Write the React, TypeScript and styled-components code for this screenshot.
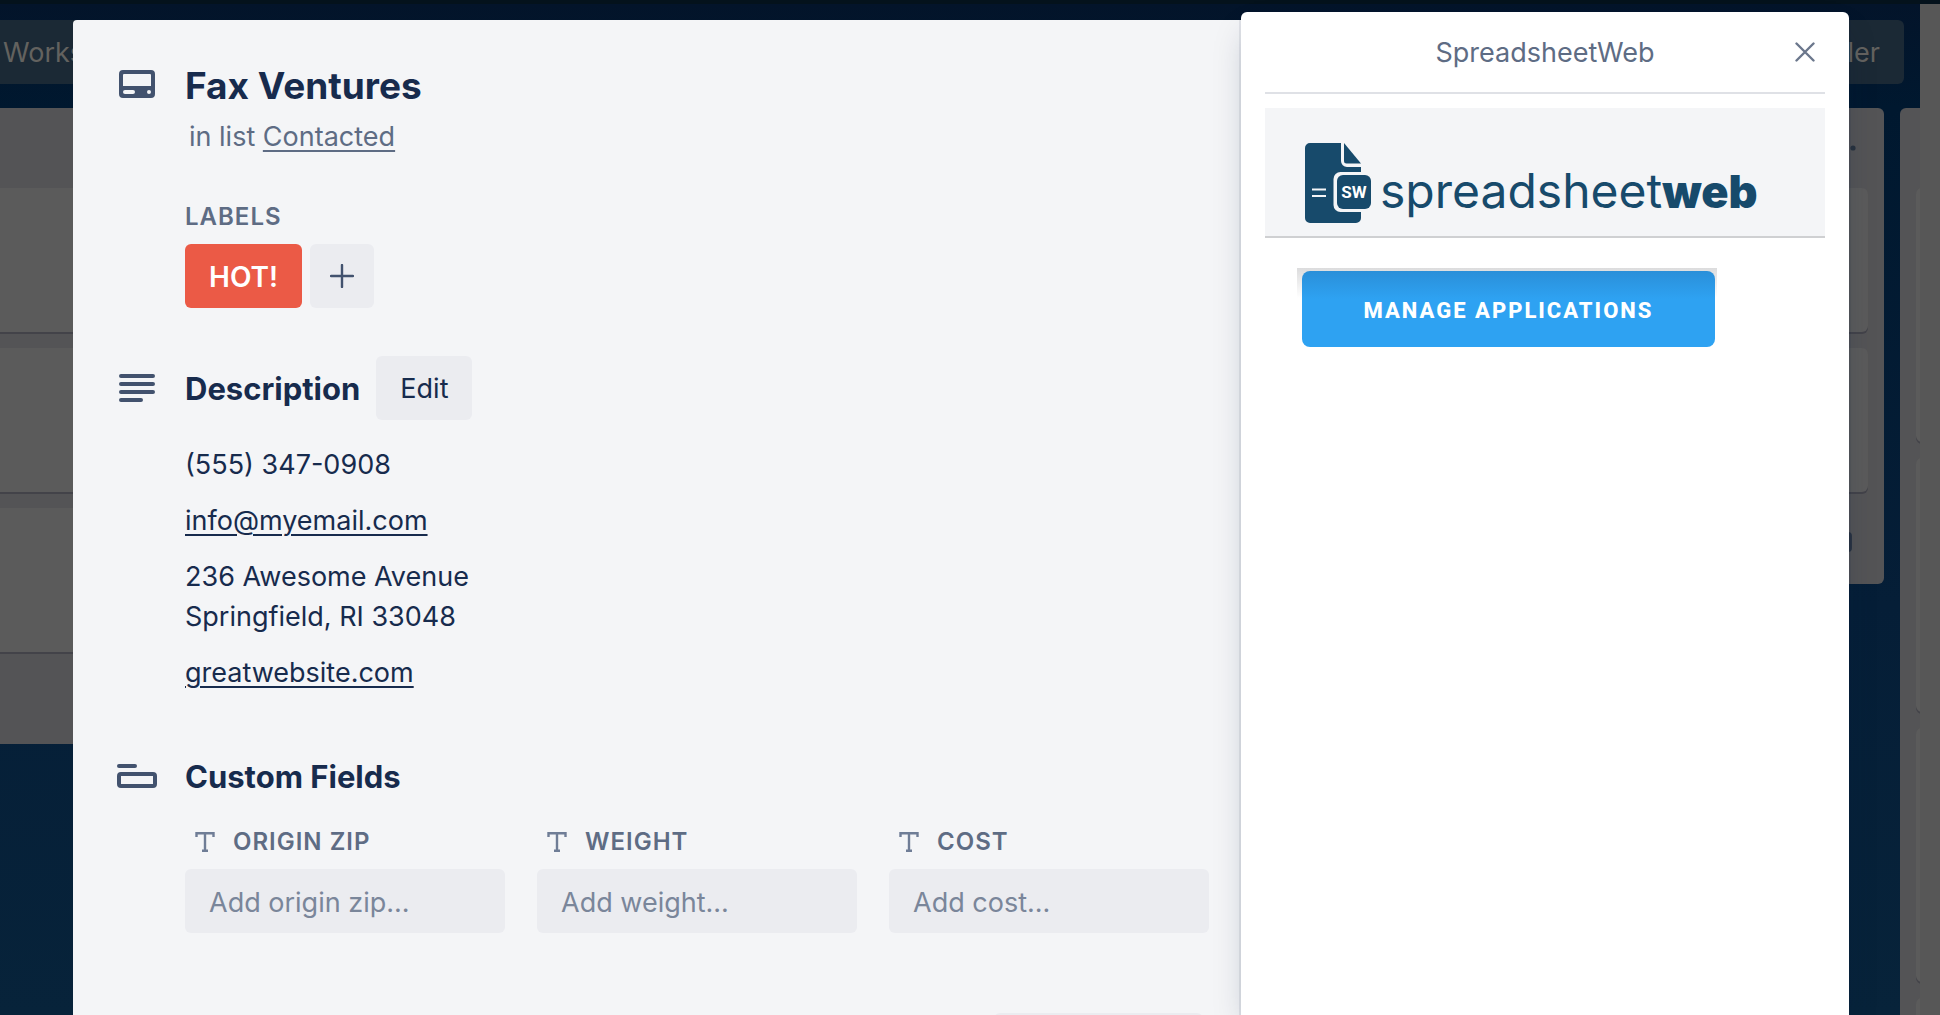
import React from "react";
import styled, { createGlobalStyle } from "styled-components";

const GlobalStyle = createGlobalStyle`
  *, *::before, *::after { box-sizing: border-box; }
  html, body { margin: 0; height: 100%; overflow: hidden; background: #051f38; }
  body, button, input {
    font-family: Inter, "Liberation Sans", sans-serif;
    font-size: 27px;
    line-height: 40px;
  }
  h1, h2, h3, p { margin: 0; }
`;

/* ---------- dimmed board behind the dialog ---------- */

const Page = styled.div`
  position: relative;
  display: flex;
  flex-direction: column;
  height: 100vh;
  overflow: hidden;
  background: #575757;
`;

const WindowStrip = styled.div`
  flex: none;
  height: 4px;
  background: #04121c;
`;

const Board = styled.div`
  flex: 1;
  min-height: 0;
  display: flex;
  flex-direction: column;
  margin-right: 20px;
  overflow: hidden;
  background: linear-gradient(#03142a, #00182f 104px, #051e37 600px, #07233a);
`;

const BoardBar = styled.div`
  display: flex;
  justify-content: space-between;
  padding: 16px 16px 24px 0;
`;

const BoardButton = styled.button<{ $flushLeft?: boolean }>`
  height: 64px;
  padding: ${(p) => (p.$flushLeft ? "2px 24px 0 3px" : "2px 24px 0")};
  border: 0;
  border-radius: ${(p) => (p.$flushLeft ? "0 6px 6px 0" : "6px")};
  background: #1b2935;
  color: #63625f;
`;

const Lists = styled.div`
  flex: 1;
  min-height: 0;
  display: flex;
  align-items: flex-start;
  justify-content: flex-end;
  gap: 16px;
  margin-right: -524px;
`;

const List = styled.section`
  flex: none;
  display: flex;
  flex-direction: column;
  gap: 16px;
  width: 544px;
  padding: 0 16px;
  border-radius: 6px;
  background: #545456;
`;

const ListTop = styled.div`
  display: flex;
  justify-content: flex-end;
  align-items: center;
  height: 64px;
  padding: 16px 12px 0 0;
`;

const Card = styled.div<{ $height: number }>`
  height: ${(p) => p.$height}px;
  border-radius: 6px;
  background: #5b5b5b;
  box-shadow: 0 2px 0 #434349;
`;

const ListFoot = styled.div<{ $height: number }>`
  display: flex;
  justify-content: flex-end;
  height: ${(p) => p.$height}px;
  padding: 24px 16px 0 0;
`;

const TemplateMark = styled.span`
  width: 20px;
  height: 20px;
  border: 4px solid #2b3442;
  border-radius: 4px;
`;

/* ---------- card dialog ---------- */

const Overlay = styled.div`
  position: absolute;
  inset: 0;
  display: grid;
  grid-template-columns: minmax(0, 1fr) 608px;
  padding: 12px 91px 0 73px;
`;

const CardDialog = styled.main`
  display: flex;
  flex-direction: column;
  margin-top: 8px;
  padding: 40px 32px 0 46px;
  border-radius: 4px 0 0 0;
  background: #f4f5f7;
  overflow: hidden;
`;

const Row = styled.div<{ $top?: number }>`
  display: grid;
  grid-template-columns: 66px minmax(0, 1fr);
  align-items: center;
  margin-top: ${(p) => p.$top ?? 0}px;
`;

const Indent = styled.div<{ $top: number }>`
  margin: ${(p) => p.$top}px 0 0 66px;
`;

const Title = styled.h1`
  height: 48px;
  padding-top: 2px;
  font-size: 37px;
  line-height: 48px;
  font-weight: 700;
  color: #172b4d;
`;

const Heading = styled.h2`
  height: 40px;
  padding-top: 1px;
  font-size: 31px;
  line-height: 40px;
  font-weight: 700;
  color: #172b4d;
`;

const HeadingLine = styled.div`
  display: flex;
  align-items: center;
  gap: 16px;
`;

const InList = styled.p`
  margin-left: 4px;
  color: #5e6c84;
`;

const TextLink = styled.a`
  color: inherit;
  text-decoration: underline;
  text-decoration-thickness: 2px;
  text-underline-offset: 4px;
`;

const Caption = styled.h3`
  font-size: 24px;
  line-height: 32px;
  font-weight: 600;
  letter-spacing: 1px;
  text-transform: uppercase;
  color: #5e6c84;
`;

const Tags = styled.div`
  display: flex;
  gap: 8px;
  margin-top: 11px;
`;

const Tag = styled.button`
  height: 64px;
  padding: 2px 24px 0;
  border: 0;
  border-radius: 6px;
  background: #eb5a46;
  color: #fff;
  font-size: 28px;
  font-weight: 600;
`;

const SoftButton = styled.button<{ $square?: boolean }>`
  display: flex;
  align-items: center;
  justify-content: center;
  width: ${(p) => (p.$square ? "64px" : "auto")};
  height: 64px;
  padding: ${(p) => (p.$square ? "0" : "2px 24px 0")};
  border: 0;
  border-radius: 6px;
  background: #ebecf0;
  color: #172b4d;
`;

const Description = styled.div`
  display: flex;
  flex-direction: column;
  gap: 16px;
  color: #172b4d;
`;

const Fields = styled.div`
  display: grid;
  grid-template-columns: repeat(3, minmax(0, 1fr));
  gap: 32px;
`;

const Field = styled.div`
  display: flex;
  flex-direction: column;
  gap: 11px;
`;

const FieldLabel = styled.label`
  display: flex;
  align-items: center;
  gap: 18px;
  padding-left: 10px;
  font-size: 24px;
  line-height: 32px;
  font-weight: 600;
  letter-spacing: 1px;
  text-transform: uppercase;
  color: #5e6c84;
`;

const FieldInput = styled.input`
  width: 100%;
  height: 64px;
  padding: 2px 24px 0;
  border: 0;
  border-radius: 6px;
  background: #ebecf0;
  color: #172b4d;
  &::placeholder { color: #7a869a; opacity: 1; }
`;

const ActivityBar = styled.div`
  display: flex;
  justify-content: flex-end;
  margin-top: 80px;
  padding-right: 6px;
`;

const ActivityButton = styled(SoftButton)`
  width: 209px;
`;

/* ---------- power-up popup ---------- */

const Popup = styled.aside`
  position: relative;
  z-index: 1;
  padding: 0 24px;
  border-radius: 6px 6px 0 0;
  background: #fff;
  box-shadow: 0 16px 32px -8px rgba(9, 30, 66, 0.25), 0 0 0 2px rgba(9, 30, 66, 0.08);
`;

const PopupHeader = styled.header`
  display: grid;
  grid-template-columns: 40px 1fr 40px;
  align-items: center;
  height: 82px;
  border-bottom: 2px solid #dfe1e6;
`;

const PopupTitle = styled.h2`
  grid-column: 2;
  padding-top: 2px;
  font-size: 27px;
  line-height: 40px;
  font-weight: 400;
  text-align: center;
  color: #5e6c84;
`;

const CloseButton = styled.button`
  display: flex;
  align-items: center;
  justify-content: center;
  width: 40px;
  height: 40px;
  padding: 0;
  border: 0;
  background: none;
`;

const Banner = styled.div`
  display: flex;
  align-items: flex-start;
  gap: 9px;
  height: 130px;
  margin-top: 14px;
  padding: 35px 0 0 40px;
  border-bottom: 2px solid #cfd0d2;
  background: #f4f5f7;
`;

const BrandMark = styled.svg`
  flex: none;
`;

const Wordmark = styled.span`
  padding-top: 16px;
  font-size: 48px;
  line-height: 64px;
  font-weight: 400;
  color: #174a6b;
  b { font-size: 45px; font-weight: 900; }
`;

const ManageFrame = styled.div`
  width: 420px;
  margin: 30px 0 0 32px;
  padding: 3px 2px 0 5px;
  background: linear-gradient(#dcdcdd, #fff 30px);
`;

const ManageButton = styled.button`
  display: block;
  width: 100%;
  height: 76px;
  padding: 4px 0 0;
  border: 0;
  border-radius: 8px;
  background: linear-gradient(#2a8fd9, #2ea2f2 28px);
  color: #fff;
  font-family: Roboto, "Liberation Sans", sans-serif;
  font-size: 22px;
  line-height: 32px;
  font-weight: 800;
  letter-spacing: 2px;
`;

const CardIcon = () => (
  <svg width="36" height="28" viewBox="0 0 36 28" aria-hidden="true">
    <path
      fill="#42526e"
      fillRule="evenodd"
      d="M4 0h28a4 4 0 0 1 4 4v20a4 4 0 0 1-4 4H4a4 4 0 0 1-4-4V4a4 4 0 0 1 4-4zm1 4a1 1 0 0 0-1 1v11h28V5a1 1 0 0 0-1-1zm1 16a2 2 0 0 0 0 4h8a2 2 0 0 0 0-4zm24 0a2 2 0 1 0 0 4a2 2 0 0 0 0-4z"
    />
  </svg>
);

const LinesIcon = () => (
  <svg width="36" height="28" viewBox="0 0 36 28" aria-hidden="true">
    <path d="M2 2h32M2 10h32M2 18h32M2 26h20" stroke="#42526e" strokeWidth="4" strokeLinecap="round" />
  </svg>
);

const WideIcon = styled.svg`
  margin-left: -2px;
`;

const FieldsIcon = () => (
  <WideIcon width="40" height="24" viewBox="0 0 40 24" aria-hidden="true">
    <path d="M2 2h16" stroke="#42526e" strokeWidth="4" strokeLinecap="round" />
    <rect x="2" y="10" width="36" height="12" rx="2" fill="none" stroke="#42526e" strokeWidth="4" />
  </WideIcon>
);

const TextIcon = () => (
  <svg width="20" height="20" viewBox="0 0 20 20" aria-hidden="true">
    <path d="M1.500 5V1.200h17V5M10 1.200v17.400M7 18.800h6" fill="none" stroke="#6f7d96" strokeWidth="2.400" />
  </svg>
);

const PlusIcon = () => (
  <svg width="24" height="24" viewBox="0 0 24 24" aria-hidden="true">
    <path d="M12 1v22M1 12h22" stroke="#42526e" strokeWidth="2.400" strokeLinecap="round" />
  </svg>
);

const CloseIcon = () => (
  <svg width="20" height="20" viewBox="0 0 20 20" aria-hidden="true">
    <path d="M1.500 1.500l17 17M18.500 1.500l-17 17" stroke="#6b778c" strokeWidth="2.400" strokeLinecap="round" />
  </svg>
);

const FileMark = () => (
  <BrandMark width="66" height="80" viewBox="0 0 66 80" aria-hidden="true">
    <path d="M5 0h31v18a6 6 0 0 0 6 6h14v51a5 5 0 0 1-5 5H5a5 5 0 0 1-5-5V5a5 5 0 0 1 5-5z" fill="#174a6b" />
    <path d="M39 0l17 20.500H41.500A2.500 2.500 0 0 1 39 18z" fill="#174a6b" />
    <rect x="28.500" y="29" width="40" height="40" rx="7" fill="#f4f5f7" />
    <rect x="32" y="32" width="34" height="34" rx="6" fill="#174a6b" />
    <path d="M7 46.500h14M7 53h14" stroke="#f4f5f7" strokeWidth="2" />
    <text x="49" y="55" textAnchor="middle" fontFamily="Roboto, sans-serif" fontSize="17" fontWeight="700" fill="#fff">
      SW
    </text>
  </BrandMark>
);

const Dot = () => (
  <svg width="6" height="6" viewBox="0 0 6 6" aria-hidden="true">
    <circle cx="3" cy="3" r="2.600" fill="#28323e" />
  </svg>
);

const lists = [
  { cards: [144, 144, 144], foot: 76 },
  { cards: [144, 144], foot: 76 },
  { cards: [144, 144], foot: 76 },
  { cards: [144, 144], foot: 76, marks: true },
  { cards: [254, 254, 254, 254], foot: 76 },
];

const fields = [
  { id: "origin-zip", label: "Origin zip", hint: "Add origin zip..." },
  { id: "weight", label: "Weight", hint: "Add weight..." },
  { id: "cost", label: "Cost", hint: "Add cost..." },
];

export default function App() {
  return (
    <>
      <GlobalStyle />
      <Page>
        <WindowStrip />
        <Board>
          <BoardBar>
            <BoardButton $flushLeft>Workspace</BoardButton>
            <BoardButton>Butler</BoardButton>
          </BoardBar>
          <Lists>
            {lists.map((list, i) => (
              <List key={i}>
                <ListTop>{list.marks && <Dot />}</ListTop>
                {list.cards.map((height, j) => (
                  <Card key={j} $height={height} />
                ))}
                <ListFoot $height={list.foot}>{list.marks && <TemplateMark />}</ListFoot>
              </List>
            ))}
          </Lists>
        </Board>

        <Overlay>
          <CardDialog>
            <Row>
              <CardIcon />
              <Title>Fax Ventures</Title>
            </Row>
            <Indent $top={9}>
              <InList>
                in list <TextLink href="#contacted">Contacted</TextLink>
              </InList>
            </Indent>

            <Indent $top={44}>
              <Caption>Labels</Caption>
              <Tags>
                <Tag>HOT!</Tag>
                <SoftButton $square aria-label="Add label">
                  <PlusIcon />
                </SoftButton>
              </Tags>
            </Indent>

            <Row $top={48}>
              <LinesIcon />
              <HeadingLine>
                <Heading>Description</Heading>
                <SoftButton>Edit</SoftButton>
              </HeadingLine>
            </Row>
            <Indent $top={25}>
              <Description>
                <p>(555) 347-0908</p>
                <p>
                  <TextLink href="#email">info@myemail.com</TextLink>
                </p>
                <p>
                  236 Awesome Avenue
                  <br />
                  Springfield, RI 33048
                </p>
                <p>
                  <TextLink href="#website">greatwebsite.com</TextLink>
                </p>
              </Description>
            </Indent>

            <Row $top={63}>
              <FieldsIcon />
              <Heading>Custom Fields</Heading>
            </Row>
            <Indent $top={30}>
              <Fields>
                {fields.map((field) => (
                  <Field key={field.id}>
                    <FieldLabel htmlFor={field.id}>
                      <TextIcon />
                      {field.label}
                    </FieldLabel>
                    <FieldInput id={field.id} type="text" placeholder={field.hint} />
                  </Field>
                ))}
              </Fields>
            </Indent>
            <ActivityBar>
              <ActivityButton aria-label="Activity" />
            </ActivityBar>
          </CardDialog>

          <Popup>
            <PopupHeader>
              <PopupTitle>SpreadsheetWeb</PopupTitle>
              <CloseButton aria-label="Close">
                <CloseIcon />
              </CloseButton>
            </PopupHeader>
            <Banner>
              <FileMark />
              <Wordmark>
                spreadsheet<b>web</b>
              </Wordmark>
            </Banner>
            <ManageFrame>
              <ManageButton>MANAGE APPLICATIONS</ManageButton>
            </ManageFrame>
          </Popup>
        </Overlay>
      </Page>
    </>
  );
}
